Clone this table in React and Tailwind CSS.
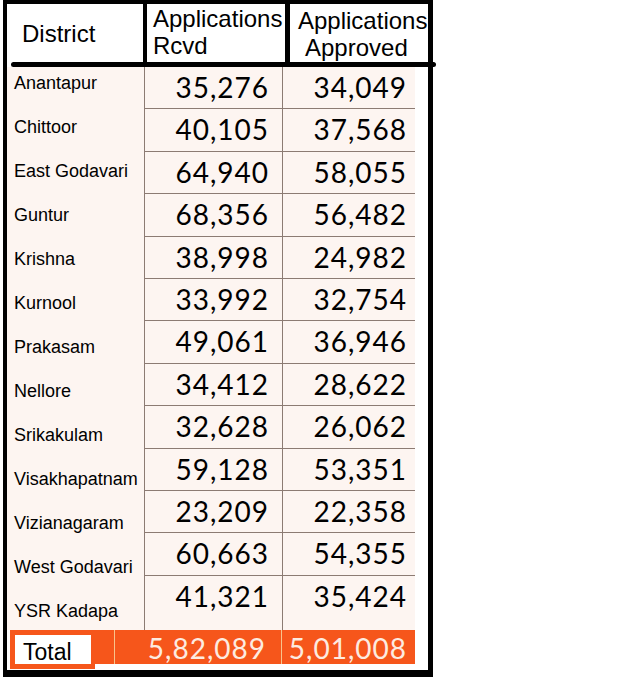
import React from "react";

const rows = [
  ["Anantapur", "35,276", "34,049"],
  ["Chittoor", "40,105", "37,568"],
  ["East Godavari", "64,940", "58,055"],
  ["Guntur", "68,356", "56,482"],
  ["Krishna", "38,998", "24,982"],
  ["Kurnool", "33,992", "32,754"],
  ["Prakasam", "49,061", "36,946"],
  ["Nellore", "34,412", "28,622"],
  ["Srikakulam", "32,628", "26,062"],
  ["Visakhapatnam", "59,128", "53,351"],
  ["Vizianagaram", "23,209", "22,358"],
  ["West Godavari", "60,663", "54,355"],
  ["YSR Kadapa", "41,321", "35,424"],
];

const arial = { fontFamily: '"Liberation Sans", Arial, sans-serif' };
const num = { fontFamily: 'Lato, "Open Sans", sans-serif' };

export default function App() {
  return (
    <div className="w-[640px] h-[681px] bg-white">
      <div
        className="ml-[3px] w-[430px] h-[677px] flex flex-col border-t-[4px] border-l-[4px] border-r-[5px] border-b-[7px] border-black text-black"
        style={arial}
      >
        {/* header */}
        <div className="flex h-[58px] shrink-0">
          <div className="w-[140px] border-r-[4px] border-black flex items-center pl-[15px] pt-[2px] text-[24px] leading-none">
            District
          </div>
          <div className="w-[143px] border-r-[5px] border-black pl-[6px] pt-[1px] text-[24px] leading-[27px] whitespace-nowrap">
            <div>Applications</div>
            <div>Rcvd</div>
          </div>
          <div className="w-[138px] pl-[8px] pt-[3px] text-[24px] leading-[27px] whitespace-nowrap">
            <div>Applications</div>
            <div className="pl-[7px]">Approved</div>
          </div>
        </div>
        <div className="h-[5px] shrink-0 bg-black ml-[4px] mr-[-8px] rounded-full" />

        {/* body */}
        <div className="flex h-[563px] shrink-0">
          <div className="w-[138px] bg-[#fdf5f1] border-r border-[#8c7b73] pt-[6px]" style={arial}>
            {rows.map(([d]) => (
              <div key={d} className="h-[44px] pl-[7px] text-[18px] leading-[20px] whitespace-nowrap">
                {d}
              </div>
            ))}
          </div>
          <div className="w-[270px] flex flex-col bg-[#fdf5f1]" style={num}>
            {rows.map(([d, a, b], i) => (
              <div
                key={d}
                className={
                  i === rows.length - 1
                    ? "flex flex-1 text-[28px] leading-[28px] tracking-[1px]"
                    : "flex h-[42.4px] border-b border-[#8c7b73] text-[28px] leading-[28px] tracking-[1px]"
                }
              >
                <div className="w-[138px] border-r border-[#8c7b73] text-right pr-[13px] pt-[6px]">{a}</div>
                <div className="flex-1 text-right pr-[8px] pt-[6px]">{b}</div>
              </div>
            ))}
          </div>
        </div>

        {/* total */}
        <div className="flex shrink-0">
          <div className="w-[405px] ml-[3px] flex flex-col">
            <div className="flex h-[34px] bg-[#f6561b]">
              <div className="w-[105px] border-r border-[#f8c48c] pl-[5px] pt-[5px]">
                <div className="w-[76px] h-[32px] bg-white text-[23px] leading-[32px] pl-[8px] pt-[1px]">Total</div>
              </div>
              <div
                className="w-[167px] border-r border-[#f8c48c] text-right pr-[15px] pt-[4px] text-[28px] leading-[28px] tracking-[1px] text-[#fdebe0]"
                style={num}
              >
                5,82,089
              </div>
              <div
                className="flex-1 text-right pr-[8px] pt-[4px] text-[28px] leading-[28px] tracking-[1px] text-[#fdebe0]"
                style={num}
              >
                5,01,008
              </div>
            </div>
            <div className="w-[85px] h-[5px] bg-[#f6561b]" />
          </div>
        </div>
      </div>
    </div>
  );
}
